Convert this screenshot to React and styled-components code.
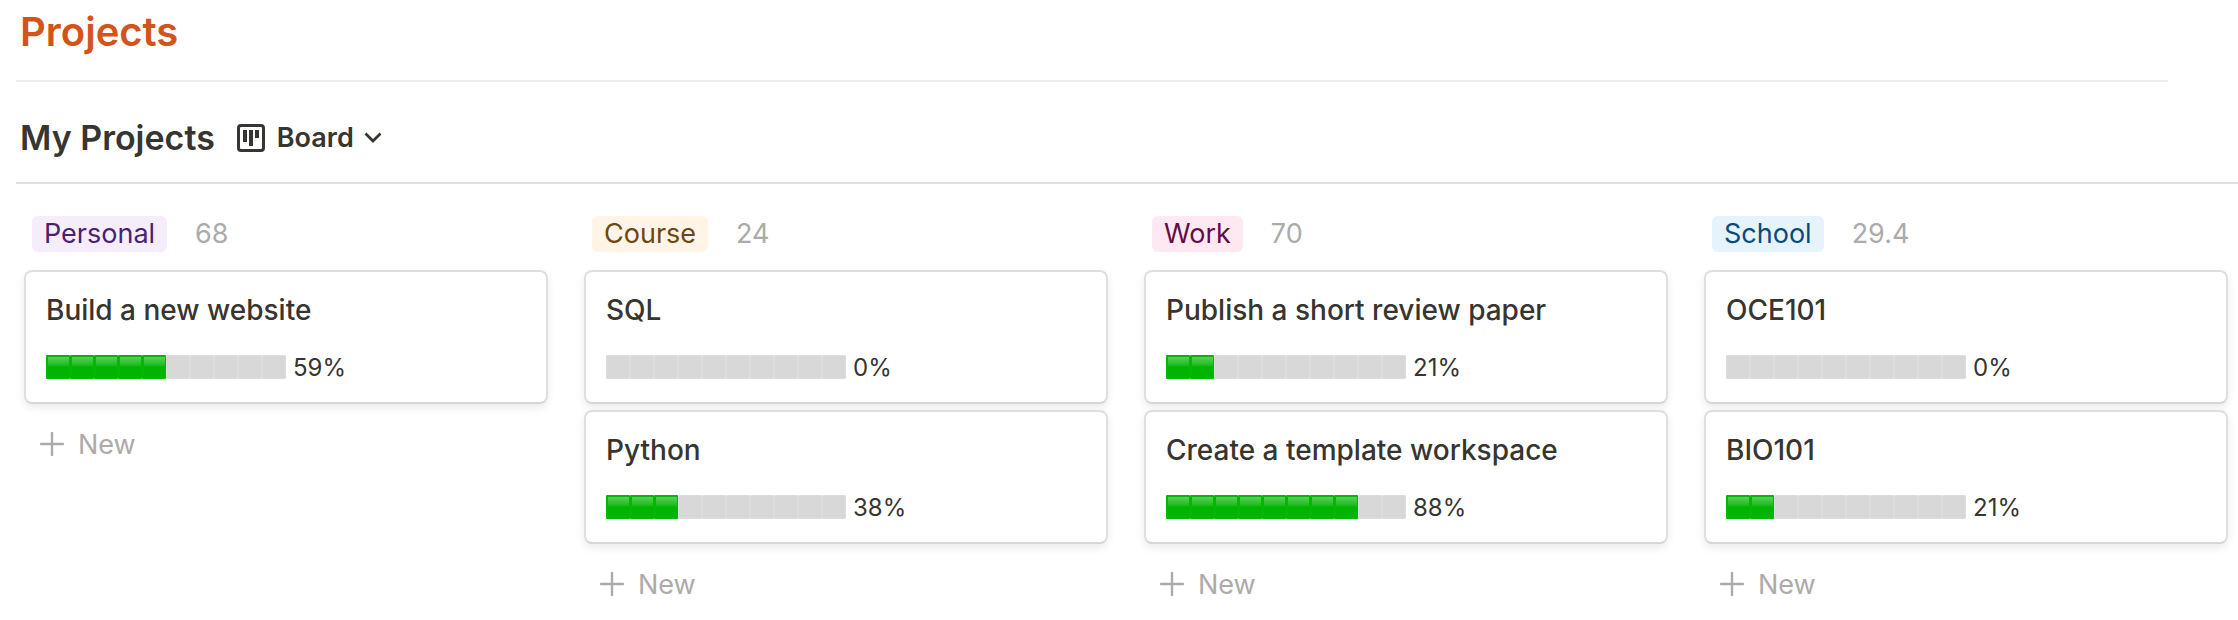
import styled, { createGlobalStyle } from 'styled-components';

const GlobalStyle = createGlobalStyle`
  * {
    box-sizing: border-box;
  }

  body {
    margin: 0;
    background: #fff;
    color: #37352f;
    font-family: Inter, "Liberation Sans", sans-serif;
    font-size: 27px;
  }
`

const PageTitle = styled.h1`
  margin: 0;
  padding: 6px 20px 22px;
  color: #d3541a;
  font-size: 40px;
  font-weight: 600;
  line-height: 52px;
`

const Divider = styled.hr`
  height: 2px;
  margin: 0 70px 0 16px;
  border: none;
  background: #ededec;
`

const Toolbar = styled.header`
  display: flex;
  align-items: center;
  gap: 22px;
  height: 102px;
  margin-left: 16px;
  padding: 12px 4px 0;
  border-bottom: 2px solid #dfdfde;
`

const DatabaseTitle = styled.h2`
  margin: 0;
  font-size: 34px;
  font-weight: 600;
  line-height: 44px;
`

const ViewButton = styled.button`
  display: flex;
  align-items: center;
  padding: 0;
  border: none;
  background: none;
  color: inherit;
  font: inherit;
  font-weight: 600;
  line-height: 44px;
  cursor: pointer;
`

const ViewName = styled.span`
  margin: 0 10px 0 12px;
`

const Board = styled.main`
  display: grid;
  grid-template-columns: repeat(4, 1fr);
  gap: 36px;
  align-items: start;
  padding: 14px 10px 0 24px;
`

const ColumnHeader = styled.div`
  display: flex;
  align-items: center;
  gap: 28px;
  height: 72px;
  padding-left: 8px;
`

const Tag = styled.h3`
  margin: 0;
  padding: 0 12px;
  border-radius: 6px;
  background: ${props => props.$background};
  color: ${props => props.$color};
  font-size: 27px;
  font-weight: 400;
  line-height: 36px;
`

const Total = styled.span`
  color: #acabaa;
  line-height: 36px;
`

const Card = styled.article`
  padding: 16px 20px 18px;
  border: 2px solid #dfdfde;
  border-bottom-color: #d6d6d5;
  border-radius: 8px;
  background: #fff;
  box-shadow: 0 4px 8px rgba(15, 15, 15, 0.08);

  & + & {
    margin-top: 6px;
  }
`

const CardTitle = styled.h4`
  margin: 0 0 18px;
  font-size: 28px;
  font-weight: 500;
  line-height: 44px;
`

const Progress = styled.div`
  display: flex;
  align-items: center;
  height: 34px;
  font-size: 24px;
`

const Percent = styled.span`
  margin-left: 7px;
`

const Cell = styled.span`
  width: 24px;
  height: 24px;
  border: 1px solid #dcdcdc;
  border-radius: 1px;
  background: #d8d8d8;

  ${props => props.$done && `
    border: 2px solid #00b900;
    border-right-width: 1px;
    background: linear-gradient(#58cf58, #1fbd1f 40%, #00b400 50%) padding-box;
  `}
`

const NewButton = styled.button`
  display: flex;
  align-items: center;
  gap: 14px;
  width: 100%;
  height: 64px;
  margin-top: 8px;
  padding: 0 16px;
  border: none;
  background: none;
  color: #acabaa;
  font: inherit;
  cursor: pointer;
`

const columns = [
  {
    name: 'Personal', total: '68', background: '#f5edfb', color: '#492270',
    projects: [{ name: 'Build a new website', percent: 59 }],
  },
  {
    name: 'Course', total: '24', background: '#fff4e6', color: '#6b4711',
    projects: [{ name: 'SQL', percent: 0 }, { name: 'Python', percent: 38 }],
  },
  {
    name: 'Work', total: '70', background: '#fee9f2', color: '#640c46',
    projects: [
      { name: 'Publish a short review paper', percent: 21 },
      { name: 'Create a template workspace', percent: 88 },
    ],
  },
  {
    name: 'School', total: '29.4', background: '#e4f3fc', color: '#0b4a7a',
    projects: [{ name: 'OCE101', percent: 0 }, { name: 'BIO101', percent: 21 }],
  },
]

function BoardIcon() {
  return (
    <svg width="28" height="28" viewBox="0 0 28 28" fill="none" aria-hidden="true">
      <rect x="1.5" y="1.5" width="25" height="25" rx="2.5" stroke="currentColor" strokeWidth="3" />
      <path d="M6 6h4v12H6zM12 6h4v16h-4zM18 6h4v8h-4z" fill="currentColor" />
    </svg>
  )
}

function ChevronIcon() {
  return (
    <svg width="18" height="12" viewBox="0 0 18 12" fill="none" aria-hidden="true">
      <path d="M1.5 1.5L9 9l7.500-7.500" stroke="currentColor" strokeWidth="2.800" />
    </svg>
  )
}

function PlusIcon() {
  return (
    <svg width="24" height="24" viewBox="0 0 24 24" aria-hidden="true">
      <path d="M12 1v22M1 12h22" stroke="currentColor" strokeWidth="2.400" strokeLinecap="round" />
    </svg>
  )
}

function ProjectCard({ project }) {
  // 10 cells, only full tens are green
  const done = Math.floor(project.percent / 10);
  return (
    <Card>
      <CardTitle>{project.name}</CardTitle>
      <Progress>
        {Array.from({ length: 10 }, (_, i) => <Cell key={i} $done={i < done} />)}
        <Percent>{project.percent}%</Percent>
      </Progress>
    </Card>
  )
}

export default function App() {
  return (
    <>
      <GlobalStyle />
      <PageTitle>Projects</PageTitle>
      <Divider />
      <Toolbar>
        <DatabaseTitle>My Projects</DatabaseTitle>
        <ViewButton type="button">
          <BoardIcon />
          <ViewName>Board</ViewName>
          <ChevronIcon />
        </ViewButton>
      </Toolbar>
      <Board>
        {columns.map(column => (
          <section key={column.name}>
            <ColumnHeader>
              <Tag $background={column.background} $color={column.color}>{column.name}</Tag>
              <Total>{column.total}</Total>
            </ColumnHeader>
            {column.projects.map(project => <ProjectCard key={project.name} project={project} />)}
            <NewButton type="button">
              <PlusIcon />
              New
            </NewButton>
          </section>
        ))}
      </Board>
    </>
  )
}
